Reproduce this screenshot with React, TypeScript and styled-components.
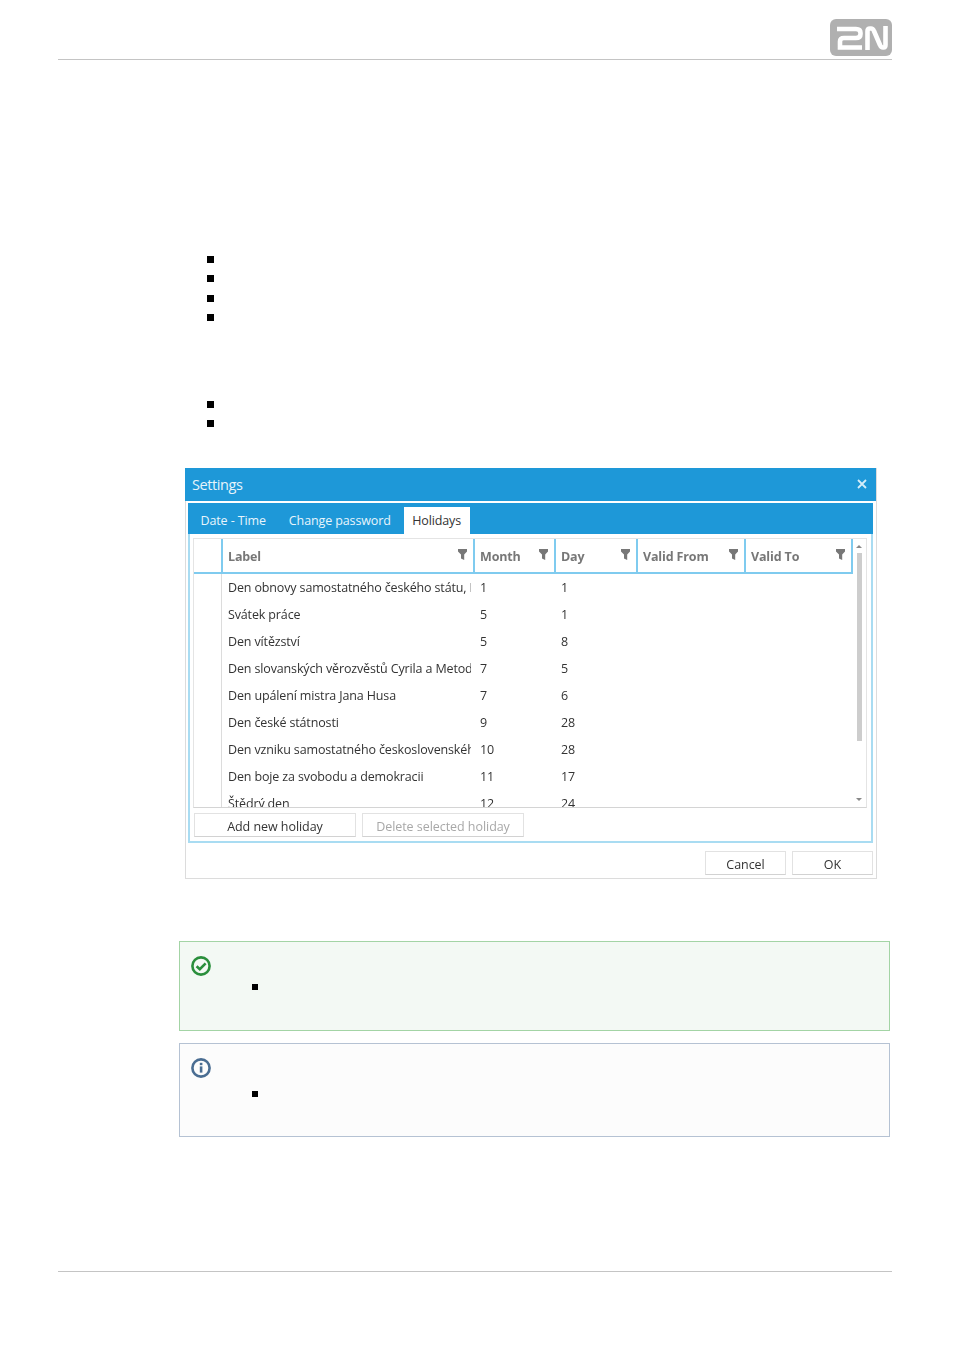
import styled, { createGlobalStyle } from "styled-components";

const GlobalStyle = createGlobalStyle`
  html, body {
    margin: 0;
    padding: 0;
    background: #fff;
  }
  * {
    box-sizing: border-box;
  }
`;

const Page = styled.div`
  width: 954px;
  height: 1350px;
  padding: 19px 62px 0 58px;
  display: flex;
  flex-direction: column;
  font-family: "Open Sans", "Liberation Sans", sans-serif;
  overflow: hidden;
`;

const Header = styled.header`
  display: flex;
  justify-content: flex-end;
  height: 41px;
  flex: none;
  border-bottom: 1px solid #c4c4c4;
`;

const Content = styled.main`
  display: flex;
  flex-direction: column;
  padding-left: 121px;
  flex: 1;
`;

const BulletList = styled.ul<{ $top: number; $bottom: number }>`
  list-style: none;
  margin: ${(p) => p.$top}px 0 ${(p) => p.$bottom}px 28px;
  padding: 0;
  display: flex;
  flex-direction: column;
  gap: 12.3px;
`;

const Bullet = styled.li`
  width: 7px;
  height: 7px;
  background: #000;
`;

const Dialog = styled.section`
  width: 692px;
  height: 411px;
  flex: none;
  margin-left: 6px;
  border: 1px solid #dcdcdc;
  border-top: 0;
  display: flex;
  flex-direction: column;
  filter: blur(0.3px);
`;

const TitleBar = styled.div`
  height: 33px;
  flex: none;
  background: #1e98d8;
  color: #e6f4fb;
  font-size: 14.5px;
  letter-spacing: -0.4px;
  margin-left: -1px;
  padding: 0 8px 0 7px;
  display: flex;
  align-items: center;
  justify-content: space-between;
`;

const CloseIcon = styled.svg`
  width: 10px;
  height: 10px;
  margin-right: 1px;
`;

const TabPanel = styled.div`
  height: 340px;
  flex: none;
  margin: 2px 3px 0 2px;
  border: 2px solid #a9dcf2;
  border-top: 0;
  display: flex;
  flex-direction: column;
`;

const TabStrip = styled.div`
  height: 31px;
  flex: none;
  background: #1e98d8;
  margin: 0 -2px;
  padding: 4px 0 0 2px;
  display: flex;
  align-items: stretch;
  gap: 2px;
  font-size: 12.5px;
  letter-spacing: -0.12px;
`;

const Tab = styled.div<{ $active?: boolean }>`
  display: flex;
  align-items: center;
  padding-top: 1px;
  color: ${(p) => (p.$active ? "#333" : "#e8f5fc")};
  background: ${(p) => (p.$active ? "#fff" : "transparent")};
  padding-left: ${(p) => (p.$active ? "8.5px" : "10.5px")};
  padding-right: ${(p) => (p.$active ? "8.5px" : "10.5px")};
  margin-left: ${(p) => (p.$active ? "0.5px" : "0")};
`;

const GridBox = styled.div`
  height: 270px;
  flex: none;
  margin: 4px 4px 0 3px;
  border: 1px solid #e4e4e4;
  border-bottom-color: #d4d4d4;
  display: flex;
  overflow: hidden;
`;

const Table = styled.div`
  width: 659px;
  flex: none;
  display: flex;
  flex-direction: column;
`;

const columns = "27px 252px 81px 82px 108px 109px";

const HeadRow = styled.div`
  display: grid;
  grid-template-columns: ${columns};
  height: 35px;
  flex: none;
  border-bottom: 2px solid #7fcbef;
`;

const HeadCell = styled.div`
  display: flex;
  align-items: center;
  justify-content: space-between;
  padding: 2px 6px 0 5px;
  border-left: 2px solid #7fcbef;
  font-size: 12.5px;
  font-weight: 700;
  letter-spacing: -0.15px;
  color: #777;

  &:last-child {
    border-right: 2px solid #7fcbef;
  }
`;

const Funnel = styled.svg`
  width: 9px;
  height: 11px;
  margin-top: -4px;
  flex: none;
`;

const Row = styled.div`
  display: grid;
  grid-template-columns: ${columns};
  height: 27px;
  flex: none;
`;

const RowGutter = styled.div`
  width: 28px;
  border-right: 1px solid #dcdcdc;
`;

const Cell = styled.div`
  display: flex;
  align-items: center;
  padding-left: 7px;
  margin-right: 2px;
  font-size: 12.5px;
  letter-spacing: -0.14px;
  color: #333;
  white-space: nowrap;
  overflow: hidden;
`;

const Scrollbar = styled.div`
  width: 12px;
  display: flex;
  flex-direction: column;
  align-items: center;
  padding-top: 6px;
`;

const Arrow = styled.div<{ $down?: boolean }>`
  width: 0;
  height: 0;
  border-left: 3px solid transparent;
  border-right: 3px solid transparent;
  ${(p) =>
    p.$down
      ? "border-top: 3px solid #888; margin-top: 57px;"
      : "border-bottom: 3px solid #888; margin-bottom: 5px;"}
`;

const Thumb = styled.div`
  width: 5px;
  height: 188px;
  flex: none;
  background: #cdcdcd;
`;

const ActionRow = styled.div`
  display: flex;
  gap: 6px;
  margin: 5px 0 0 4px;
`;

const Button = styled.button<{ $width: number; $disabled?: boolean }>`
  width: ${(p) => p.$width}px;
  height: 24px;
  background: #fff;
  border: 1px solid #e2e2e2;
  border-bottom-color: #d2d2d2;
  font-family: inherit;
  font-size: 12.5px;
  letter-spacing: -0.05px;
  color: ${(p) => (p.$disabled ? "#a8a8a8" : "#333")};
  padding: 3px 0 0;
`;

const Footer = styled.div`
  display: flex;
  justify-content: flex-end;
  gap: 6px;
  padding: 8px 3px 0 0;
`;

const Note = styled.aside<{ $kind: "success" | "info"; $height: number; $top: number }>`
  width: 711px;
  height: ${(p) => p.$height}px;
  flex: none;
  margin-top: ${(p) => p.$top}px;
  background: ${(p) => (p.$kind === "success" ? "#f3f9f4" : "#fcfcfc")};
  border: 1px solid ${(p) => (p.$kind === "success" ? "#a3d4a5" : "#b5c2d3")};
  display: flex;
  align-items: flex-start;
`;

const NoteIcon = styled.svg`
  width: 20px;
  height: 20px;
  margin: 14px 0 0 11px;
  flex: none;
  filter: blur(0.3px);
`;

const NoteBullet = styled.div<{ $top: number }>`
  width: 6px;
  height: 6px;
  background: #000;
  margin: ${(p) => p.$top}px 0 0 41px;
`;

const FooterLine = styled.footer`
  flex: none;
  margin-bottom: 78px;
  border-top: 1px solid #c4c4c4;
`;

const rows = [
  ["Den obnovy samostatného českého státu, Nový rok", "1", "1"],
  ["Svátek práce", "5", "1"],
  ["Den vítězství", "5", "8"],
  ["Den slovanských věrozvěstů Cyrila a Metoděje", "7", "5"],
  ["Den upálení mistra Jana Husa", "7", "6"],
  ["Den české státnosti", "9", "28"],
  ["Den vzniku samostatného československého státu", "10", "28"],
  ["Den boje za svobodu a demokracii", "11", "17"],
  ["Štědrý den", "12", "24"],
];

const headers = ["Label", "Month", "Day", "Valid From", "Valid To"];

function Logo() {
  return (
    <svg width="62" height="37" viewBox="0 0 62 37">
      <rect width="62" height="37" rx="6" fill="#b0b0b0" />
      <path
        d="M7 10 H26 Q30.5 10 30.5 14 V15 Q30.5 19 26 19 H14 Q10 19 10 22.5 V28.5 H32"
        fill="none"
        stroke="#fff"
        strokeWidth="4.6"
      />
      <path
        d="M37.5 31 V12 Q37.5 9.5 40 9.5 H41 Q43 9.5 44 12 L50 26 Q51 28.5 53 28.5 H53.5 Q55.5 28.5 55.5 26 V7"
        fill="none"
        stroke="#fff"
        strokeWidth="4.6"
      />
    </svg>
  );
}

function App() {
  return (
    <>
      <GlobalStyle />
      <Page>
        <Header>
          <Logo />
        </Header>
        <Content>
          <BulletList $top={196} $bottom={80}>
            <Bullet />
            <Bullet />
            <Bullet />
            <Bullet />
          </BulletList>
          <BulletList $top={0} $bottom={40.8}>
            <Bullet />
            <Bullet />
          </BulletList>
          <Dialog>
            <TitleBar>
              Settings
              <CloseIcon viewBox="0 0 10 10">
                <path d="M1 1 L9 9 M9 1 L1 9" stroke="#d5edf9" strokeWidth="1.8" />
              </CloseIcon>
            </TitleBar>
            <TabPanel>
              <TabStrip>
                <Tab>Date - Time</Tab>
                <Tab>Change password</Tab>
                <Tab $active>Holidays</Tab>
              </TabStrip>
              <GridBox>
                <Table>
                  <HeadRow>
                    <div />
                    {headers.map((h) => (
                      <HeadCell key={h}>
                        {h}
                        <Funnel viewBox="0 0 9 11">
                          <path d="M0 0 H9 V2.5 L6.2 5.5 V11 L3 9.5 V5.5 L0 2.5 Z" fill="#777" />
                        </Funnel>
                      </HeadCell>
                    ))}
                  </HeadRow>
                  {rows.map(([label, month, day]) => (
                    <Row key={label}>
                      <RowGutter />
                      <Cell>{label}</Cell>
                      <Cell>{month}</Cell>
                      <Cell>{day}</Cell>
                    </Row>
                  ))}
                </Table>
                <Scrollbar>
                  <Arrow />
                  <Thumb />
                  <Arrow $down />
                </Scrollbar>
              </GridBox>
              <ActionRow>
                <Button $width={162}>Add new holiday</Button>
                <Button $width={162} $disabled>
                  Delete selected holiday
                </Button>
              </ActionRow>
            </TabPanel>
            <Footer>
              <Button $width={81}>Cancel</Button>
              <Button $width={81}>OK</Button>
            </Footer>
          </Dialog>
          <Note $kind="success" $height={90} $top={62}>
            <NoteIcon viewBox="0 0 20 20">
              <circle cx="10" cy="10" r="8.6" fill="none" stroke="#2a8f3c" strokeWidth="2.6" />
              <path d="M5.6 10.2 L8.8 13.2 L14.6 7.4" fill="none" stroke="#2a8f3c" strokeWidth="2.6" />
            </NoteIcon>
            <NoteBullet $top={42} />
          </Note>
          <Note $kind="info" $height={94} $top={12}>
            <NoteIcon viewBox="0 0 20 20">
              <circle cx="10" cy="10" r="8.6" fill="none" stroke="#4a6d92" strokeWidth="2.6" />
              <rect x="8.8" y="8.4" width="2.6" height="6.2" fill="#4a6d92" />
              <rect x="8.8" y="4.8" width="2.6" height="2.4" fill="#4a6d92" />
            </NoteIcon>
            <NoteBullet $top={47} />
          </Note>
        </Content>
        <FooterLine />
      </Page>
    </>
  );
}

export default App;
